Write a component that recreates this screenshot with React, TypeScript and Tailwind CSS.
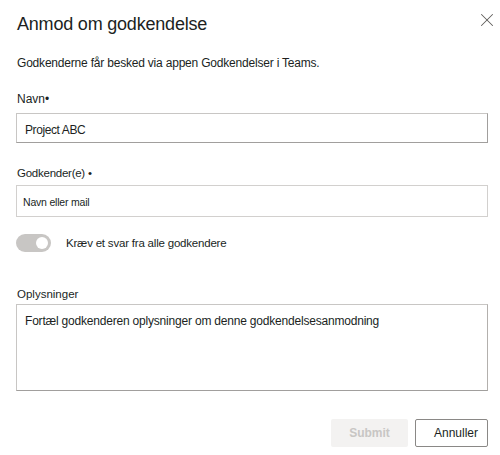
import { X } from "lucide-react"

export default function App() {
    return (
        <div className="w-[500px] h-[455px] bg-white text-[#201f1e] font-['Liberation_Sans',Arial,sans-serif]">
            <div className="flex items-start justify-between pl-[17px] pr-[2px] pt-[12px]">
                <h1 className="text-[18px] leading-[24px] font-normal tracking-[-0.2px]">Anmod om godkendelse</h1>
                <button className="-mt-[3px] text-[#605e5c]">
                    <X size={22} strokeWidth={1.1} />
                </button>
            </div>

            <div className="pl-[16px] pr-[12px]">
                <p className="text-[12px] leading-[16px] mt-[19px] pl-[1px] tracking-[-0.2px]">
                    Godkenderne får besked via appen Godkendelser i Teams.
                </p>

                <label className="block text-[12px] leading-[14px] mt-[21px] pl-[1px]">Navn•</label>
                <div className="mt-[7px] h-[30px] border border-[#c8c6c4] border-r-[#a19f9d] border-b-[#a19f9d] px-[8px] pt-[9px] text-[12px] leading-[14px] tracking-[-0.4px]">
                    Project ABC
                </div>

                <label className="block text-[11.5px] leading-[14px] mt-[23px] pl-[1px] tracking-[-0.25px]">Godkender(e) •</label>
                <div className="mt-[5px] h-[32px] border border-[#d2d0ce] px-[6px] pt-[10px] text-[10.5px] leading-[12px] tracking-[-0.2px]">
                    Navn eller mail
                </div>

                <div className="flex items-center mt-[16px]">
                    <div className="w-[35px] h-[18px] rounded-full bg-[#c8c6c4] flex items-center justify-end pr-[3px]">
                        <div className="w-[12px] h-[12px] rounded-full bg-white" />
                    </div>
                    <span className="ml-[15px] mt-[2px] text-[11.5px] tracking-[-0.2px]">Kræv et svar fra alle godkendere</span>
                </div>

                <label className="block text-[11.5px] leading-[14px] mt-[35px] pl-[1px]">Oplysninger</label>
                <div className="mt-[3px] h-[87px] border border-[#c8c6c4] border-r-[#b3b0ad] border-b-[#a19f9d] px-[8px] pt-[8px] text-[12px] leading-[16px] tracking-[-0.2px]">
                    Fortæl godkenderen oplysninger om denne godkendelsesanmodning
                </div>

                <div className="flex justify-end gap-[7px] mt-[28px]">
                    <button className="w-[77px] h-[28px] bg-[#f3f2f1] text-[#c8c6c4] text-[12px] font-bold rounded-[2px]">
                        Submit
                    </button>
                    <button className="w-[73px] h-[28px] bg-white border border-[#8a8886] text-[12px] rounded-[2px] pl-[9px]">
                        Annuller
                    </button>
                </div>
            </div>
        </div>
    )
}
